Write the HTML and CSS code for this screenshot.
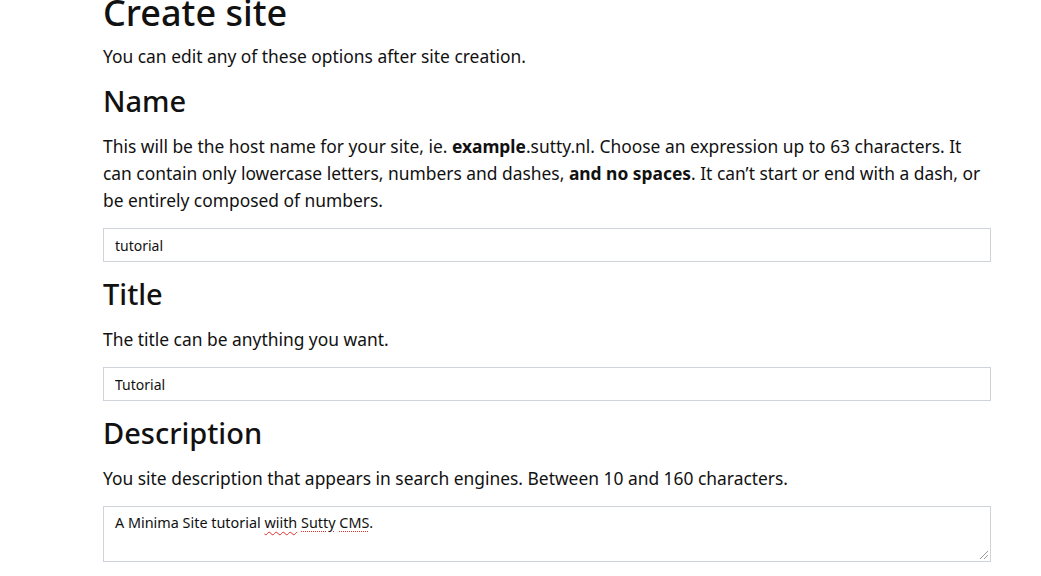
FILE: index.html
```html
<!DOCTYPE html>
<html lang="en">
<head>
<meta charset="utf-8">
<title>Create site</title>
<link rel="stylesheet" href="styles.css">
</head>
<body>
<main class="page">
  <h1 class="title">Create site</h1>
  <p class="lead">You can edit any of these options after site creation.</p>

  <h2 class="field-title">Name</h2>
  <p class="help">This will be the host name for your site, ie. <strong>example</strong>.sutty.nl. Choose an expression up to 63 characters. It can contain only lowercase letters, numbers and dashes, <strong>and no spaces</strong>. It can’t start or end with a dash, or be entirely composed of numbers.</p>
  <input class="field" type="text" value="tutorial">

  <h2 class="field-title">Title</h2>
  <p class="help">The title can be anything you want.</p>
  <input class="field" type="text" value="Tutorial">

  <h2 class="field-title">Description</h2>
  <p class="help">You site description that appears in search engines. Between 10 and 160 characters.</p>
  <div class="area">A Minima Site tutorial <span class="spell">wiith</span> <span class="spell-dot">Sutty</span> <span class="spell-dot">CMS</span>.<span class="grip"></span></div>
</main>
</body>
</html>
```

FILE: styles.css
```css
html, body {
  margin: 0;
  padding: 0;
  background: #fff;
  overflow: hidden;
}
body {
  font-family: "Noto Sans", "Open Sans", sans-serif;
  color: #111;
  font-size: 17.4px;
  line-height: 27px;
}
.page {
  width: 888px;
  margin: 0 0 0 103px;
  display: flex;
  flex-direction: column;
}
.title {
  font-size: 36px;
  font-weight: 500;
  line-height: 43px;
  margin: -9px 0 0;
}
.lead {
  margin: 9px 0 -1px;
}
.field-title {
  font-size: 29px;
  font-weight: 500;
  line-height: 34px;
  margin: 15px 0 0;
}
.help {
  max-width: 882px;
  margin: 15px 0 0;
}
.help strong {
  font-weight: 700;
}
.field {
  margin: 14px 0 0;
  box-sizing: border-box;
  height: 34px;
  width: 888px;
  border: 1px solid #ced4da;
  padding: 0 11px;
  font-family: "Noto Sans", "Open Sans", sans-serif;
  font-size: 14px;
  color: #111;
  background: #fff;
  outline: none;
}
.area {
  position: relative;
  margin: 14px 0 0;
  box-sizing: border-box;
  height: 56px;
  width: 888px;
  border: 1px solid #ced4da;
  padding: 6px 11px;
  font-size: 14.4px;
  line-height: 20px;
}
.spell {
  text-decoration: underline wavy #e03030;
  text-decoration-thickness: 1px;
  text-underline-offset: 3px;
}
.spell-dot {
  text-decoration: underline dotted #e03030;
  text-decoration-thickness: 1px;
  text-underline-offset: 3px;
}
.grip {
  position: absolute;
  right: 2px;
  bottom: 2px;
  width: 10px;
  height: 10px;
  background: repeating-linear-gradient(135deg, transparent 0 2px, #999 2px 3px);
  clip-path: polygon(100% 0, 100% 100%, 0 100%);
}
```
